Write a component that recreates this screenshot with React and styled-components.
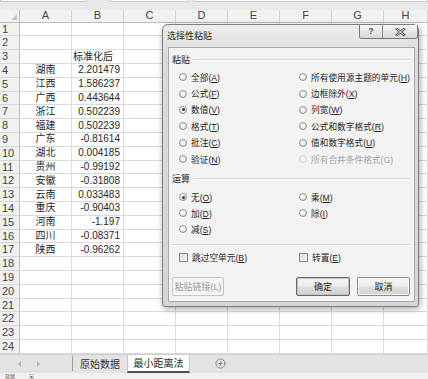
import React from 'react';
import styled, { createGlobalStyle } from 'styled-components';
import { CirclePlus } from 'lucide-react';

const FONT = `"Liberation Sans", "Noto Sans CJK SC", sans-serif`;

const GlobalStyle = createGlobalStyle`
  html, body { margin: 0; padding: 0; background: #fff; }
  #root { width: 428px; height: 379px; overflow: hidden; }
`;

const NAMES = ['湖南', '江西', '广西', '浙江', '福建', '广东', '湖北', '贵州', '安徽', '云南', '重庆', '河南', '四川', '陕西'];
const VALUES = ['2.201479', '1.586237', '0.443644', '0.502239', '0.502239', '-0.81614', '0.004185', '-0.99192', '-0.31808', '0.033483', '-0.90403', '-1.197', '-0.08371', '-0.96262'];
const COLS = ['A', 'B', 'C', 'D', 'E', 'F', 'G', 'H'];

const PASTE = [
  { t: '全部', k: 'A' }, { t: '所有使用源主题的单元', k: 'H' },
  { t: '公式', k: 'F' }, { t: '边框除外', k: 'X' },
  { t: '数值', k: 'V', on: true }, { t: '列宽', k: 'W' },
  { t: '格式', k: 'T' }, { t: '公式和数字格式', k: 'R' },
  { t: '批注', k: 'C' }, { t: '值和数字格式', k: 'U' },
  { t: '验证', k: 'N' }, { t: '所有合并条件格式', k: 'G', off: true },
];
const OPS = [
  { t: '无', k: 'O', on: true }, { t: '乘', k: 'M' },
  { t: '加', k: 'D' }, { t: '除', k: 'I' },
  { t: '减', k: 'S' },
];

const Page = styled.div`
  position: relative;
  width: 428px;
  height: 379px;
  display: flex;
  flex-direction: column;
  font-family: ${FONT};
  background: #fff;
  overflow: hidden;
`;

const TopStrip = styled.div`
  height: 10px;
  flex: none;
  display: flex;
  align-items: flex-start;
  background: #e9e9e9;
`;

const TopBox = styled.div`
  width: ${p => (p.$w ? `${p.$w}px` : 'auto')};
  flex: ${p => (p.$w ? 'none' : 1)};
  margin-right: ${p => p.$gap || 0}px;
  height: 1px;
  background: #fff;
  border: 1px solid #c8c8c8;
  border-top: none;
`;

const Sheet = styled.div`
  flex: none;
  display: grid;
  grid-template-columns: 20px repeat(7, 52px) 1fr;
  grid-template-rows: 12.7px repeat(24, 13.8px);
`;

const Corner = styled.div`
  position: relative;
  background: #f1f1f1;
  border-right: 1px solid #bdbdbd;
  border-bottom: 1px solid #bdbdbd;
  &::after {
    content: '';
    position: absolute;
    right: 2px;
    bottom: 2px;
    border-left: 6px solid transparent;
    border-bottom: 6px solid #c6c6c6;
  }
`;

const ColHead = styled.div`
  background: #f1f1f1;
  border-right: 1px solid #d3d3d3;
  border-bottom: 1px solid #bdbdbd;
  font-size: 11px;
  color: #444;
  display: flex;
  align-items: center;
  justify-content: center;
  line-height: 1;
`;

const RowHead = styled.div`
  background: #f1f1f1;
  border-right: 1px solid #bdbdbd;
  border-bottom: 1px solid #d6d6d6;
  font-size: 11px;
  color: #444;
  display: flex;
  align-items: center;
  padding-left: 2px;
  line-height: 1;
`;

const Cell = styled.div`
  border-right: 1px solid #dadada;
  border-bottom: 1px solid #dadada;
  font-size: 10px;
  color: #262626;
  display: flex;
  align-items: center;
  justify-content: ${p => p.$align || 'flex-start'};
  padding: 0 3px 0 ${p => (p.$align ? 3 : 1)}px;
  white-space: nowrap;
  line-height: 1;
  min-width: 0;
`;

const TabBar = styled.div`
  height: 19px;
  flex: none;
  box-sizing: border-box;
  display: flex;
  align-items: stretch;
  background: #e3e3e3;
  border-top: 1px solid #cfcfcf;
  font-size: 10px;
  color: #333;
`;

const NavArea = styled.div`
  width: 72px;
  display: flex;
  align-items: center;
  padding-left: 18px;
  gap: 16px;
  box-sizing: border-box;
`;

const NavArrow = styled.span`
  width: 0;
  height: 0;
  border-top: 3px solid transparent;
  border-bottom: 3px solid transparent;
  ${p => (p.$dir === 'left' ? 'border-right: 3px solid #b4b4b4;' : 'border-left: 3px solid #b4b4b4;')}
`;

const TabSep = styled.span`
  align-self: center;
  width: 0;
  height: 15px;
  border-left: 1px solid #9c9c9c;
`;

const Tab = styled.div`
  width: ${p => p.$w}px;
  display: flex;
  align-items: center;
  justify-content: center;
  box-sizing: border-box;
  background: ${p => (p.$active ? '#fff' : 'transparent')};
  border-bottom: ${p => (p.$active ? '2px solid #505050' : 'none')};
  border-left: ${p => (p.$active ? '1px solid #c8c8c8' : 'none')};
  border-right: ${p => (p.$active ? '1px solid #c8c8c8' : 'none')};
  color: ${p => (p.$active ? '#2a2a2a' : '#333')};
`;

const AddSheet = styled.div`
  display: flex;
  align-items: center;
  margin-left: 25px;
  color: #666;
`;

const StatusBar = styled.div`
  flex: 1;
  display: flex;
  align-items: flex-start;
  gap: 14px;
  padding: 0 0 0 5px;
  background: #f0f0f0;
  font-size: 5px;
  color: #555;
  line-height: 6px;
`;

/* ---- dialog ---- */

const Dialog = styled.div`
  position: absolute;
  left: 162px;
  top: 24px;
  width: 257px;
  box-sizing: border-box;
  display: flex;
  flex-direction: column;
  border: 1px solid #7e7e7e;
  border-radius: 6px 6px 3px 3px;
  background: linear-gradient(180deg, #eeeeee 0%, #dcdcdc 10%, #d5d5d5 100%);
  box-shadow: 1px 2px 6px rgba(0, 0, 0, 0.35);
  color: #1f1f1f;
`;

const TitleBar = styled.div`
  height: 22px;
  display: flex;
  align-items: flex-start;
`;

const TitleText = styled.div`
  line-height: 22px;
  padding-left: 4px;
  font-size: 9px;
  color: #2b2b2b;
`;

const CaptionGroup = styled.div`
  margin-left: auto;
  display: flex;
  height: 13px;
  border: 1px solid #7b7b7b;
  border-top: none;
  border-radius: 0 0 3px 3px;
  overflow: hidden;
`;

const CaptionBtn = styled.div`
  width: ${p => p.$w}px;
  display: flex;
  align-items: center;
  justify-content: center;
  background: linear-gradient(180deg, #f8f8f8 0%, #e8e8e8 50%, #d8d8d8 100%);
  border-left: ${p => (p.$sep ? '1px solid #8a8a8a' : 'none')};
  font-size: 9px;
  font-weight: bold;
  color: #555;
  line-height: 1;
`;

const Panel = styled.div`
  margin: 0 3px 4px 5px;
  background: #f3f3f3;
  border: 1px solid #a8a8a8;
  padding: 5px 4px 5px 3px;
  display: flex;
  flex-direction: column;
`;

const SectionTitle = styled.div`
  display: flex;
  align-items: center;
  gap: 3px;
  height: 13px;
  font-size: 9px;
  margin-top: ${p => p.$mt || 0}px;
  &::after {
    content: '';
    flex: 1;
    border-top: 1px solid #d6d6d6;
    border-bottom: 1px solid #fff;
  }
`;

const OptionGrid = styled.div`
  display: grid;
  grid-template-columns: 120px 1fr;
  grid-auto-rows: ${p => p.$row}px;
  padding-left: 7px;
  margin-top: ${p => p.$mt || 0}px;
`;

const Option = styled.label`
  display: flex;
  align-items: center;
  gap: 4px;
  font-size: 8.7px;
  white-space: nowrap;
  color: ${p => (p.$off ? '#a6a6a6' : '#1f1f1f')};
`;

const Radio = styled.span`
  position: relative;
  flex: none;
  width: 8px;
  height: 8px;
  box-sizing: border-box;
  border-radius: 50%;
  border: 1px solid ${p => (p.$off ? '#d0d0d0' : '#939393')};
  background: ${p => (p.$off ? '#f3f3f3' : 'radial-gradient(circle at 40% 35%, #ffffff 0%, #e6e6e6 60%, #cfcfcf 100%)')};
  &::after {
    content: '';
    display: ${p => (p.$on ? 'block' : 'none')};
    position: absolute;
    inset: 1.5px;
    border-radius: 50%;
    background: #3a3a3a;
  }
`;

const Check = styled.span`
  flex: none;
  width: 9px;
  height: 9px;
  box-sizing: border-box;
  border: 1px solid #8e8e8e;
  background: linear-gradient(135deg, #d8d8d8 0%, #f7f7f7 100%);
`;

const Key = styled.span`
  text-decoration: ${p => (p.$plain ? 'none' : 'underline')};
`;

const Divider = styled.div`
  margin-top: ${p => p.$mt || 0}px;
  border-top: 1px solid #d6d6d6;
  border-bottom: 1px solid #fff;
`;

const ButtonRow = styled.div`
  display: flex;
  gap: 7px;
  margin-top: 13px;
`;

const Btn = styled.button`
  width: ${p => p.$w}px;
  height: 19px;
  box-sizing: border-box;
  padding: 0;
  margin-left: ${p => (p.$push ? 'auto' : '0')};
  font-family: ${FONT};
  font-size: 9px;
  border-radius: 2px;
  border: 1px solid ${p => (p.$default ? '#6a6a6a' : p.disabled ? '#c4c4c4' : '#8a8a8a')};
  background: ${p => (p.disabled
    ? '#f4f4f4'
    : 'linear-gradient(180deg, #f7f7f7 0%, #ececec 48%, #dedede 52%, #d2d2d2 100%)')};
  color: ${p => (p.disabled ? '#9d9d9d' : '#1f1f1f')};
  box-shadow: ${p => (p.$default ? 'inset 0 0 0 1px #bfbfbf' : 'inset 0 0 0 1px #f9f9f9')};
`;

function Mnemonic({ text, k, plain }) {
  return (
    <span>
      {text}(<Key $plain={plain}>{k}</Key>)
    </span>
  );
}

function CloseGlyph() {
  return (
    <svg width="11" height="8" viewBox="0 0 11 8">
      <path d="M2 1 L9 7 M9 1 L2 7" stroke="#5a5a5a" strokeWidth="2.6" strokeLinecap="square" />
      <path d="M2 1 L9 7 M9 1 L2 7" stroke="#f2f2f2" strokeWidth="0.9" strokeLinecap="square" />
    </svg>
  );
}

function PasteDialog() {
  return (
    <Dialog>
      <TitleBar>
        <TitleText>选择性粘贴</TitleText>
        <CaptionGroup>
          <CaptionBtn $w={22}>?</CaptionBtn>
          <CaptionBtn $w={34} $sep><CloseGlyph /></CaptionBtn>
        </CaptionGroup>
      </TitleBar>
      <Panel>
        <SectionTitle>粘贴</SectionTitle>
        <OptionGrid $row={16.4} $mt={3}>
          {PASTE.map(o => (
            <Option key={o.k} $off={o.off}>
              <Radio $on={o.on} $off={o.off} />
              <Mnemonic text={o.t} k={o.k} plain={o.off} />
            </Option>
          ))}
        </OptionGrid>
        <SectionTitle $mt={5}>运算</SectionTitle>
        <OptionGrid $row={16} $mt={4}>
          {OPS.map(o => (
            <Option key={o.k}>
              <Radio $on={o.on} />
              <Mnemonic text={o.t} k={o.k} />
            </Option>
          ))}
        </OptionGrid>
        <Divider $mt={7} />
        <OptionGrid $row={14} $mt={4}>
          <Option><Check /><Mnemonic text="跳过空单元" k="B" /></Option>
          <Option><Check /><Mnemonic text="转置" k="E" /></Option>
        </OptionGrid>
        <ButtonRow>
          <Btn $w={52} disabled>粘贴链接(L)</Btn>
          <Btn $w={54} $push $default>确定</Btn>
          <Btn $w={53}>取消</Btn>
        </ButtonRow>
      </Panel>
    </Dialog>
  );
}

function cellContent(row, col) {
  if (row === 3 && col === 'B') return { text: '标准化后' };
  if (row >= 4 && row <= 17) {
    if (col === 'A') return { text: NAMES[row - 4], align: 'center' };
    if (col === 'B') return { text: VALUES[row - 4], align: 'flex-end' };
  }
  return { text: '' };
}

export default function App() {
  const rows = Array.from({ length: 24 }, (_, i) => i + 1);
  return (
    <Page>
      <GlobalStyle />
      <TopStrip>
        <TopBox $w={85} $gap={22} />
        <TopBox $w={78} $gap={4} />
        <TopBox />
      </TopStrip>
      <Sheet>
        <Corner />
        {COLS.map(c => <ColHead key={c}>{c}</ColHead>)}
        {rows.map(r => (
          <React.Fragment key={r}>
            <RowHead>{r}</RowHead>
            {COLS.map(c => {
              const { text, align } = cellContent(r, c);
              return <Cell key={c} $align={align}>{text}</Cell>;
            })}
          </React.Fragment>
        ))}
      </Sheet>
      <TabBar>
        <NavArea>
          <NavArrow $dir="left" />
          <NavArrow $dir="right" />
        </NavArea>
        <TabSep />
        <Tab $w={54}>原始数据</Tab>
        <Tab $w={63} $active>最小距离法</Tab>
        <AddSheet><CirclePlus size={11} strokeWidth={1.5} /></AddSheet>
      </TabBar>
      <StatusBar>
        <span>就绪</span>
        <span>▣</span>
      </StatusBar>
      <PasteDialog />
    </Page>
  );
}
